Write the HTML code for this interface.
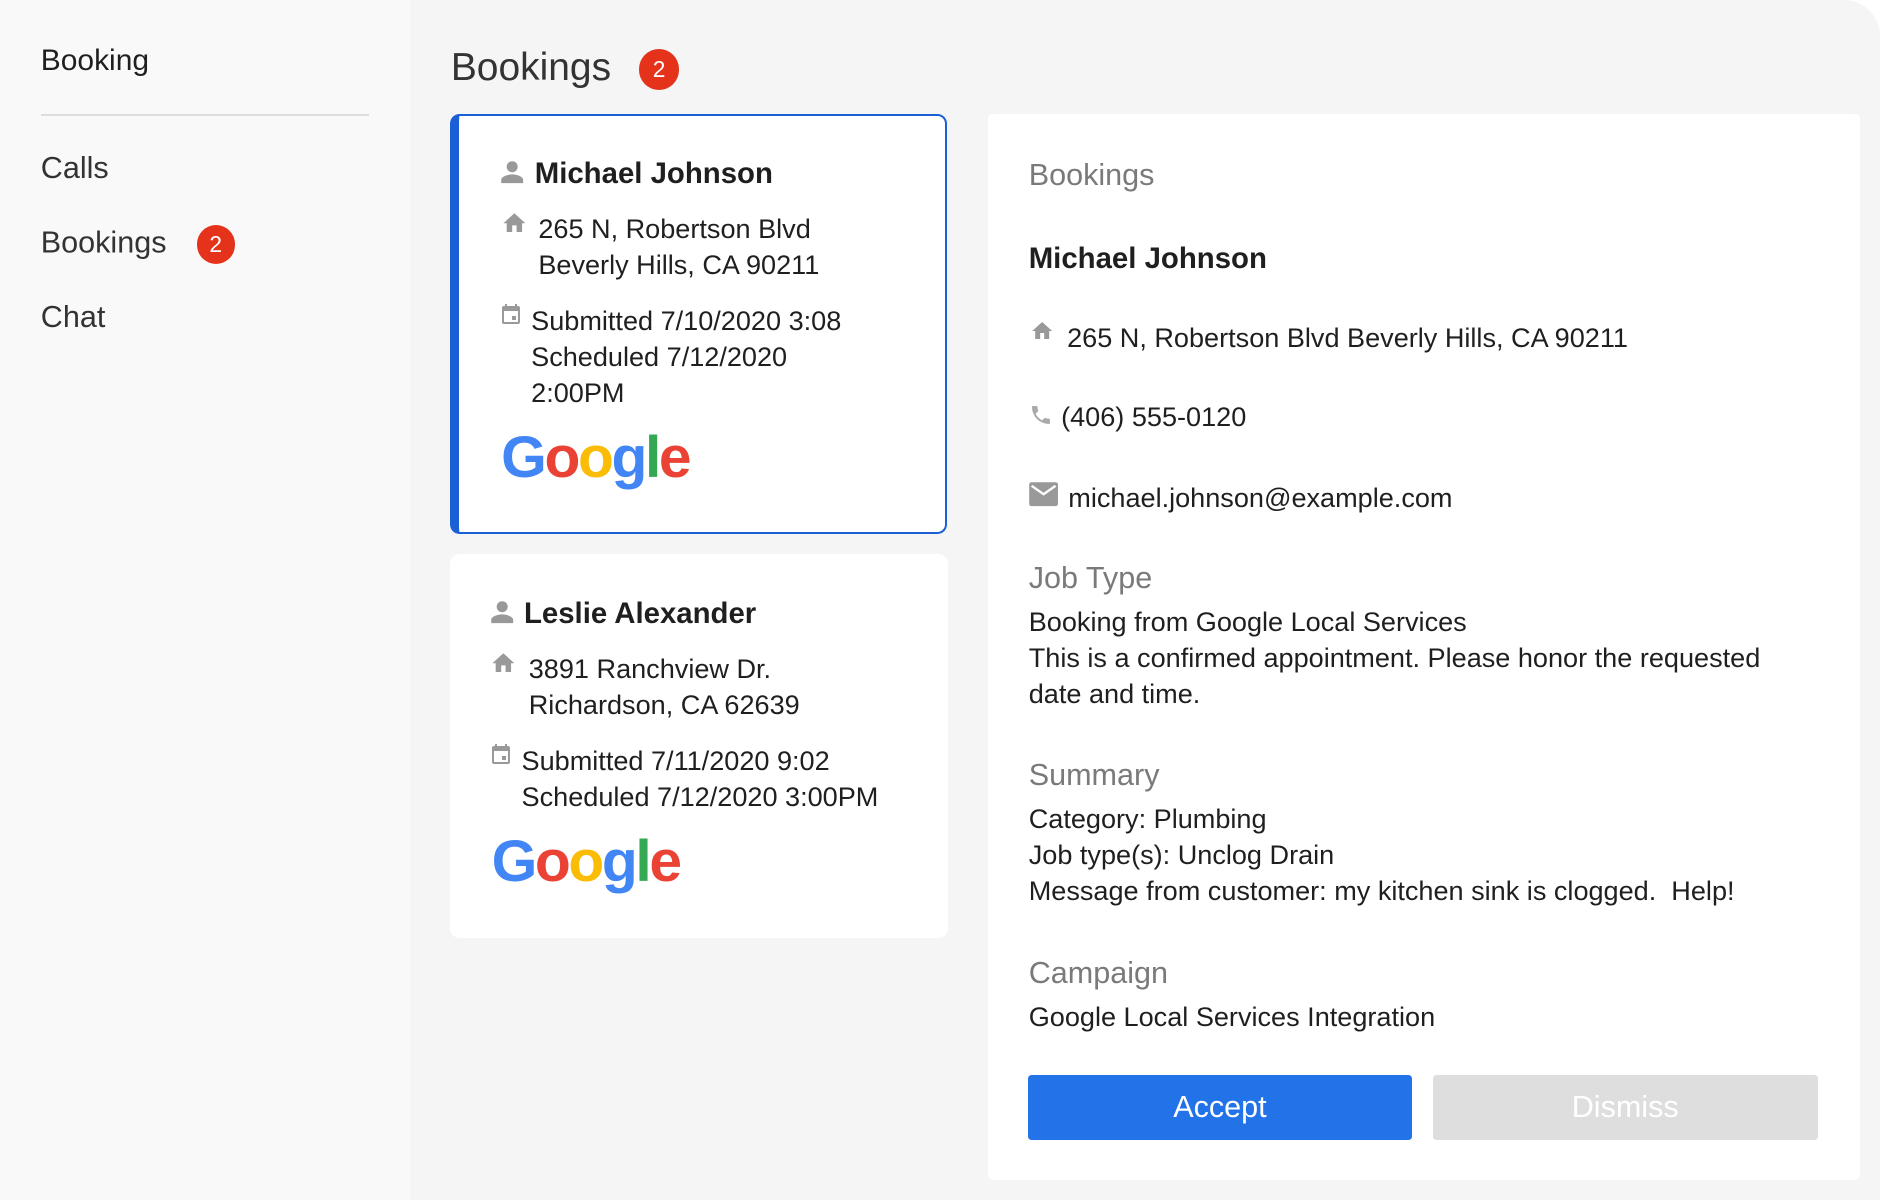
<!DOCTYPE html>
<html><head><style>
html,body{margin:0;padding:0;background:#fff;width:1880px;height:1200px;overflow:hidden}
#r{zoom:1.19898;position:relative;width:1568px;height:1001px;font-family:"Liberation Sans",sans-serif;color:#1f1f1f}
.a{position:absolute;white-space:nowrap}
.side{left:0;top:0;width:342px;height:1001px;background:#f9f9f9}
.main{left:342px;top:0;width:1226px;height:1001px;background:#f5f5f5;border-radius:0 30px 0 0}
.badge{display:inline-block;width:32px;height:32px;border-radius:50%;background:#e4321b;color:#fff;font-size:19px;text-align:center;line-height:32px;vertical-align:middle}
.card{background:#fff;border-radius:8px}
.nm{font-weight:bold;font-size:24.5px}
.t{font-size:22.6px;line-height:30px}
.g{font-size:49px;letter-spacing:-2px;font-family:"Liberation Sans",sans-serif;font-weight:bold}
.gr{color:#7a7a7a}
</style></head><body><div id="r">
<div class="a side"></div>
<div class="a main"></div>
<div class="a" style="left:34px;top:37px;font-size:25px">Booking</div>
<div class="a" style="left:34px;top:95px;width:274px;height:2px;background:#ddd"></div>
<div class="a" style="left:34px;top:126px;font-size:25.5px;color:#333">Calls</div>
<div class="a" style="left:34px;top:188px;font-size:25.5px;color:#333">Bookings <span class="badge" style="margin-left:18px">2</span></div>
<div class="a" style="left:34px;top:250px;font-size:25.5px;color:#333">Chat</div>
<div class="a" style="left:376px;top:38px;font-size:32.5px;color:#333">Bookings <span class="badge" style="margin-left:14px;width:34px;height:34px;line-height:34px">2</span></div>

<div class="a card" style="left:375px;top:95px;width:406px;height:347px;border:2px solid #1b5fd6;border-left:8px solid #1b5fd6"></div>
<svg class="a" style="left:416px;top:133px" width="22" height="22" viewBox="0 0 24 24"><path fill="#999" d="M12 12a5 5 0 1 0 0-10 5 5 0 0 0 0 10zm0 2c-4 0-10 2-10 5v3h20v-3c0-3-6-5-10-5z"/></svg>
<div class="a nm" style="left:446px;top:131px">Michael Johnson</div>
<svg class="a" style="left:417px;top:175px" width="24" height="22" viewBox="0 0 24 24"><path fill="#999" d="M10 20v-6h4v6h5v-8h3L12 3 2 12h3v8z"/></svg>
<div class="a t" style="left:449px;top:176px">265 N, Robertson Blvd<br>Beverly Hills, CA 90211</div>
<svg class="a" style="left:416px;top:253px" width="20" height="20" viewBox="0 0 24 24"><path fill="#999" d="M19 3h-1V1h-2v2H8V1H6v2H5a2 2 0 0 0-2 2v14a2 2 0 0 0 2 2h14a2 2 0 0 0 2-2V5a2 2 0 0 0-2-2zm0 16H5V8h14zm-6-6h4v4h-4z"/></svg>
<div class="a t" style="left:443px;top:253px">Submitted 7/10/2020 3:08<br>Scheduled 7/12/2020<br>2:00PM</div>
<div class="a g" style="left:418px;top:354px"><span style="color:#4285f4">G</span><span style="color:#ea4335">o</span><span style="color:#fbbc05">o</span><span style="color:#4285f4">g</span><span style="color:#34a853">l</span><span style="color:#ea4335">e</span></div>

<div class="a card" style="left:375px;top:462px;width:416px;height:320px"></div>
<svg class="a" style="left:408px;top:500px" width="22" height="22" viewBox="0 0 24 24"><path fill="#999" d="M12 12a5 5 0 1 0 0-10 5 5 0 0 0 0 10zm0 2c-4 0-10 2-10 5v3h20v-3c0-3-6-5-10-5z"/></svg>
<div class="a nm" style="left:437px;top:498px">Leslie Alexander</div>
<svg class="a" style="left:408px;top:542px" width="24" height="22" viewBox="0 0 24 24"><path fill="#999" d="M10 20v-6h4v6h5v-8h3L12 3 2 12h3v8z"/></svg>
<div class="a t" style="left:441px;top:543px">3891 Ranchview Dr.<br>Richardson, CA 62639</div>
<svg class="a" style="left:408px;top:620px" width="20" height="20" viewBox="0 0 24 24"><path fill="#999" d="M19 3h-1V1h-2v2H8V1H6v2H5a2 2 0 0 0-2 2v14a2 2 0 0 0 2 2h14a2 2 0 0 0 2-2V5a2 2 0 0 0-2-2zm0 16H5V8h14zm-6-6h4v4h-4z"/></svg>
<div class="a t" style="left:435px;top:620px">Submitted 7/11/2020 9:02<br>Scheduled 7/12/2020 3:00PM</div>
<div class="a g" style="left:410px;top:691px"><span style="color:#4285f4">G</span><span style="color:#ea4335">o</span><span style="color:#fbbc05">o</span><span style="color:#4285f4">g</span><span style="color:#34a853">l</span><span style="color:#ea4335">e</span></div>

<div class="a card" style="left:824px;top:95px;width:727px;height:889px;border-radius:4px"></div>
<div class="a gr" style="left:858px;top:132px;font-size:25.5px">Bookings</div>
<div class="a nm" style="left:858px;top:202px">Michael Johnson</div>
<svg class="a" style="left:858px;top:266px" width="22" height="20" viewBox="0 0 24 24"><path fill="#999" d="M10 20v-6h4v6h5v-8h3L12 3 2 12h3v8z"/></svg>
<div class="a t" style="left:890px;top:267px">265 N, Robertson Blvd Beverly Hills, CA 90211</div>
<svg class="a" style="left:858px;top:336px" width="20" height="20" viewBox="0 0 24 24"><path fill="#aaa" d="M6.6 10.8a15 15 0 0 0 6.6 6.6l2.2-2.2c.3-.3.7-.4 1-.2 1.1.4 2.3.6 3.6.6.6 0 1 .4 1 1V20c0 .6-.4 1-1 1A17 17 0 0 1 3 4c0-.6.4-1 1-1h3.5c.6 0 1 .4 1 1 0 1.3.2 2.5.6 3.6.1.3 0 .7-.2 1z"/></svg>
<div class="a t" style="left:885px;top:333px">(406) 555-0120</div>
<svg class="a" style="left:857px;top:401px" width="26" height="22" viewBox="0 0 26 22"><rect x="1" y="1" width="24" height="20" rx="2" fill="#999"/><path d="M3 4l10 7 10-7" stroke="#fff" stroke-width="2" fill="none"/></svg>
<div class="a t" style="left:891px;top:400px">michael.johnson@example.com</div>
<div class="a gr" style="left:858px;top:468px;font-size:25.5px">Job Type</div>
<div class="a t" style="left:858px;top:504px">Booking from Google Local Services<br>This is a confirmed appointment. Please honor the requested<br>date and time.</div>
<div class="a gr" style="left:858px;top:632px;font-size:25.5px">Summary</div>
<div class="a t" style="left:858px;top:668px">Category: Plumbing<br>Job type(s): Unclog Drain<br>Message from customer: my kitchen sink is clogged.&nbsp; Help!</div>
<div class="a gr" style="left:858px;top:797px;font-size:25.5px">Campaign</div>
<div class="a t" style="left:858px;top:833px">Google Local Services Integration</div>
<div class="a" style="left:857px;top:897px;width:321px;height:54px;background:#2373e8;border-radius:3px;color:#fff;font-size:25.5px;text-align:center;line-height:54px">Accept</div>
<div class="a" style="left:1195px;top:897px;width:321px;height:54px;background:#dedede;border-radius:3px;color:#fff;font-size:25.5px;text-align:center;line-height:54px">Dismiss</div>
</div></body></html>
